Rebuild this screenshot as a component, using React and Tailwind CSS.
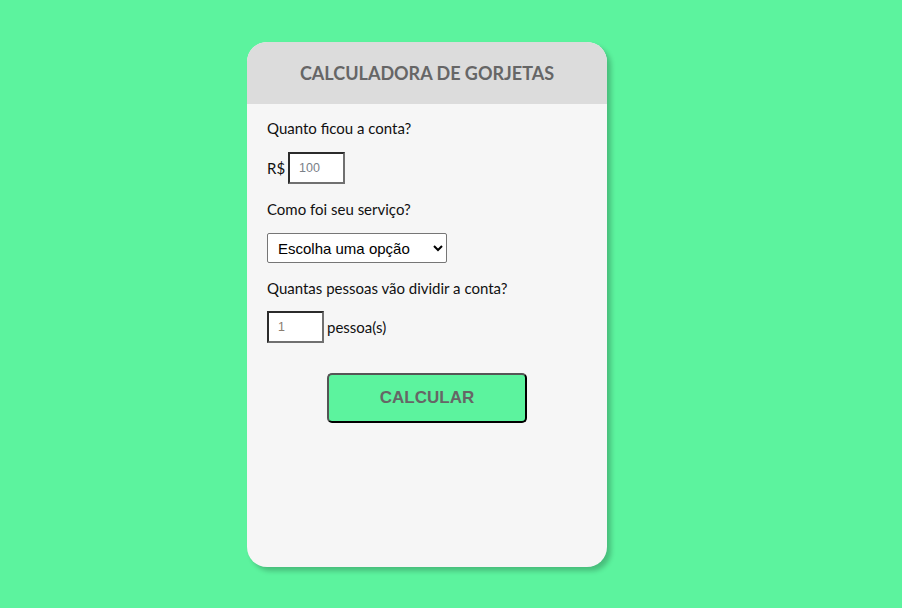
import { useState } from "react"

export default function App() {
  const [conta, setConta] = useState("")
  const [servico, setServico] = useState("")
  const [pessoas, setPessoas] = useState("")

  return (
    <div className="min-h-screen h-[608px] bg-[#5cf39e] pt-[42px] pl-[247px] font-['Lato','Liberation_Sans',sans-serif]">
      <div className="w-[360px] h-[525px] rounded-[20px] bg-[#f6f6f6] overflow-hidden shadow-[4px_4px_5px_rgba(0,0,0,0.22)]">
        {/* Header */}
        <div className="h-[62px] bg-[#dcdcdc] flex items-center justify-center">
          <h1 className="text-[18px] font-bold text-[#666]">CALCULADORA DE GORJETAS</h1>
        </div>

        {/* Form */}
        <div className="px-[20px] pt-[15px]">
          <p className="text-[15px] leading-[18px] text-[#111]">Quanto ficou a conta?</p>
          <div className="mt-[15px] h-[32px] flex items-center">
            <span className="text-[15px] leading-[18px] text-[#111] mr-[3px]">R$</span>
            <input
              type="number"
              placeholder="100"
              value={conta}
              onChange={e => setConta(e.target.value)}
              className="w-[57px] h-[32px] bg-white pl-[9px] text-[12.5px] font-['Liberation_Sans',Arial,sans-serif] text-[#111] placeholder:text-[#7a8088] border-2 border-t-[#2b2b2b] border-l-[#2b2b2b] border-r-[#707070] border-b-[#707070] outline-none"
            />
          </div>

          <p className="mt-[16px] text-[15px] leading-[18px] text-[#111]">Como foi seu serviço?</p>
          <select
            value={servico}
            onChange={e => setServico(e.target.value)}
            className="mt-[15px] block w-[180px] h-[30px] pl-[6px] pr-[4px] bg-white text-[15px] text-black font-['Liberation_Sans',Arial,sans-serif] border border-[#767676] rounded-[2px]"
          >
            <option value="">Escolha uma opção</option>
            <option value="0.3">30% - Muito bom</option>
            <option value="0.1">10% - Bom</option>
            <option value="0.05">5% - Não foi bom</option>
          </select>

          <p className="mt-[16px] text-[15px] leading-[18px] text-[#111]">Quantas pessoas vão dividir a conta?</p>
          <div className="mt-[14px] h-[32px] flex items-center">
            <input
              type="number"
              placeholder="1"
              value={pessoas}
              onChange={e => setPessoas(e.target.value)}
              className="w-[57px] h-[32px] bg-white pl-[9px] text-[12.5px] font-['Liberation_Sans',Arial,sans-serif] text-[#111] placeholder:text-[#8a7d70] border-2 border-t-[#2b2b2b] border-l-[#2b2b2b] border-r-[#707070] border-b-[#707070] outline-none"
            />
            <span className="ml-[3px] text-[15px] leading-[18px] text-[#111]">pessoa(s)</span>
          </div>

          <div className="mt-[30px] flex justify-center">
            <button className="w-[200px] h-[50px] bg-[#5cf39e] rounded-[5px] border-2 border-t-[#555] border-l-[#555] border-r-black border-b-black text-[17px] font-bold text-[#666] font-['Liberation_Sans',Arial,sans-serif]">
              CALCULAR
            </button>
          </div>
        </div>
      </div>
    </div>
  )
}
